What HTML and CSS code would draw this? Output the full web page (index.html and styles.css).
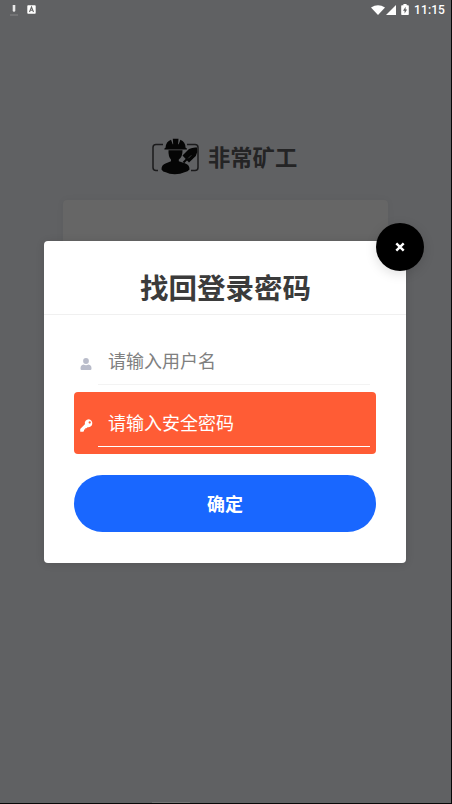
FILE: index.html
```html
<!DOCTYPE html>
<html lang="zh-CN">
<head>
<meta charset="utf-8">
<title>找回登录密码</title>
<link rel="stylesheet" href="styles.css">
</head>
<body>
<div class="screen">
  <header class="status">
    <div class="status-left">
      <svg width="12" height="14" viewBox="0 0 12 14"><path d="M4.700 2h2.600v6L6 9 4.700 8z" fill="#e8e8e8"/><path d="M2 12h8" stroke="#858687"/></svg>
      <svg width="9" height="9" viewBox="0 0 9 9"><rect x=".3" y=".3" width="8.400" height="8.400" rx=".8" fill="#fff"/><path d="M2.500 7 4.500 2l2 5M3.200 5.300h2.600" fill="none" stroke="#666" stroke-width="1.100"/></svg>
    </div>
    <div class="status-right">
      <svg width="14" height="10" viewBox="0 0 14 10"><path d="M0 2.500Q7-2 14 2.500L7 10z" fill="#fff"/></svg>
      <svg width="10" height="10" viewBox="0 0 10 10"><path d="M10 0v10H0z" fill="#fff"/></svg>
      <svg class="battery" width="8" height="11" viewBox="0 0 8 11"><path d="M2.400 0h3.200v1.200h1.500q.7 0 .7.7v8.400q0 .7-.7.7H.9q-.7 0-.7-.7V1.900q0-.7.7-.7h1.500z" fill="#fff"/><path d="M4.600 2.700 2 6.800h1.600v2.600L6.100 5.500H4.600z" fill="#606163"/></svg>
      <span class="time">11:15</span>
    </div>
  </header>
  <div class="brand">
    <svg width="48" height="38" viewBox="0 0 48 38">
      <path d="M12 7.500H5Q2 7.500 2 10.500v20Q2 33.500 5 33.500h2M36 7.500h8q3 0 3 3v20q0 3-3 3h-4" fill="none" stroke="#1b1b1c" stroke-width="1.500"/>
      <g fill="#050505">
        <path d="M14.500 10.800Q15 4.500 20 2.800l1.700 4.500h.5l-.4-5.500h5.700l-.4 5.500h.6l1.700-4.500q5 2 5.200 8l1.300.7v1H13.400v-1z"/>
        <path d="M17.500 13.300h14q.2 6.500-3.700 9.300v1.600l6.700 2.300q4.200 1.700 4 6-1.500 2.200-5 2.800-4 2-9.700 2t-9-2q-3-.4-4.300-2.800-.2-4.300 4-6l5.500-2.300v-1.600Q17.200 20 17.500 13.300z"/>
        <path d="m31.500 18.500 6.500-6.500q4-2 8-1.500 1 4.500-1.200 8.500L38 25.500z"/>
      </g>
      <path d="m32.500 25.500 8-8" stroke="#050505" stroke-width="2"/>
      <path d="m37.300 21.300 3-3" stroke="#606163" stroke-width=".6"/>
    </svg>
    <span class="brand-name">非常矿工</span>
  </div>
  <div class="login-card"></div>

  <section class="modal">
    <h1 class="title">找回登录密码</h1>
    <div class="form">
      <div class="field">
        <svg class="icon" width="11" height="12" viewBox="0 0 11 12"><circle cx="5.500" cy="3" r="2.900" fill="#b9bcca"/><path d="M0 10.500Q0 7 3 6.600q2.500 1.200 5 0 3 .4 3 3.900 0 1.500-1.200 1.500H1.200Q0 12 0 10.500z" fill="#b9bcca"/></svg>
        <div class="input">请输入用户名</div>
      </div>
      <div class="field active">
        <svg class="icon" width="13" height="13" viewBox="0 0 13 13"><path fill="#fff" fill-rule="evenodd" d="M8.700.3a4 4 0 1 1-1.200 7.900L6.400 9.300H5.200v1.300H4v1.300l-.8.8H.7Q.2 12.700.2 12.200V9.900L4.900 5.200A4 4 0 0 1 8.700.3zM9.700 2.300a1.100 1.100 0 1 0 .01 0z"/></svg>
        <div class="input">请输入安全密码</div>
      </div>
      <div class="submit">确定</div>
    </div>
    <div class="close"><svg width="10" height="10" viewBox="0 0 10 10"><path d="m1.300 1.300 7.400 7.400m0-7.400-7.400 7.400" stroke="#fff" stroke-width="2.400"/></svg></div>
  </section>
  <div class="home-hint"></div>
</div>
</body>
</html>
```
FILE: styles.css
```css
* { box-sizing: border-box; }
body { margin: 0; background: #080808; font-family: "Noto Sans CJK SC", sans-serif; }
svg { display: block; flex: none; }
.screen { position: relative; width: 451px; height: 803px; background: #606163; }
.status { height: 19px; padding: 0 6px 0 8px; display: flex; justify-content: space-between; align-items: center; }
.status-left { display: flex; align-items: center; gap: 7px; }
.status-right { display: flex; align-items: center; gap: 1px; }
.battery { margin-left: 4px; }
.time { margin-left: 4px; font: 500 12px/18px Roboto, sans-serif; letter-spacing: .1px; color: #fff; }
.brand { margin-top: 118px; height: 38px; padding-left: 151px; display: flex; align-items: center; gap: 9px; }
.brand-name { font-size: 22.3px; line-height: 38px; font-weight: 700; color: #242425; }
.login-card { margin: 25px 63px 0; height: 100px; background: #666; border-radius: 4px; box-shadow: 0 0 8px rgba(0,0,0,.04); }
.modal { position: absolute; left: 44px; top: 241px; width: 362px; height: 321.5px; background: #fff; border-radius: 4px; box-shadow: 0 1px 8px rgba(0,0,0,.12); }
.title { margin: 0; height: 74px; padding: 19px 0 0 1px; border-bottom: 1px solid #f0f0f0; text-align: center; font-size: 28.5px; line-height: 54px; font-weight: 700; color: #3b3b3b; }
.form { padding: 15px 30px 0; }
.field { height: 62px; padding: 0 6px; display: flex; color: #808080; border-radius: 4px; }
.field .icon { width: 12px; margin-top: 28px; }
.active .icon { width: 13px; margin: 27px -1px 0 0; }
.input { flex: 1; margin-left: 6px; height: 55px; padding-left: 10px; border-bottom: 1px solid #f3f3f3; font-size: 18px; line-height: 60px; }
.active { background: #ff5c35; color: #fff; }
.active .input { border-color: #fff; }
.submit { margin-top: 21px; height: 57px; border-radius: 29px; background: #1967ff; color: #fff; text-align: center; font-size: 18px; line-height: 56px; font-weight: 700; }
.close { position: absolute; right: -18px; top: -18px; width: 48px; height: 48px; border-radius: 50%; background: #000; display: flex; align-items: center; justify-content: center; box-shadow: 0 3px 12px rgba(0,0,0,.13); }
.home-hint { position: absolute; left: 152px; bottom: -1px; width: 38px; height: 2px; background: #757575; }
```
